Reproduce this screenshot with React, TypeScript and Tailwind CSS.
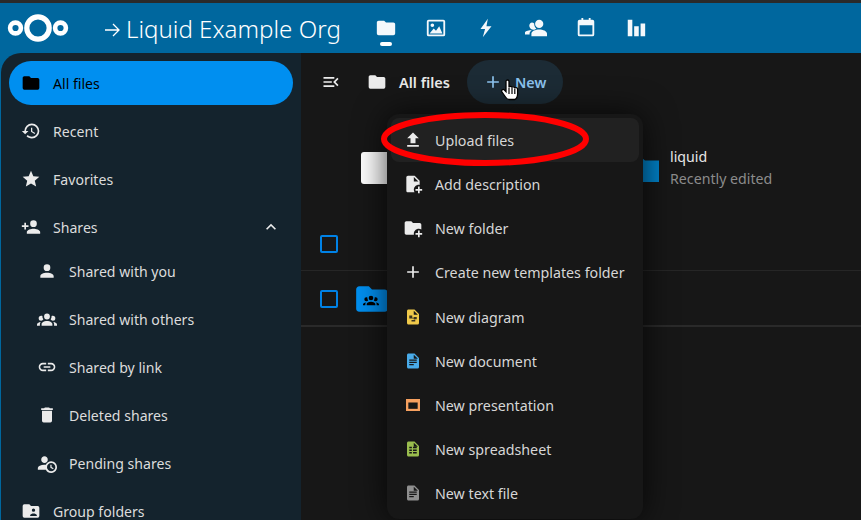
import React from "react";

const P = {
  folder: "M10,4H4C2.89,4 2,4.89 2,6V18A2,2 0 0,0 4,20H20A2,2 0 0,0 22,18V8C22,6.89 21.1,6 20,6H12L10,4Z",
  history: "M13.5,8H12V13L16.28,15.54L17,14.33L13.5,12.25V8M13,3A9,9 0 0,0 4,12H1L4.96,16.03L9,12H6A7,7 0 0,1 13,5A7,7 0 0,1 20,12A7,7 0 0,1 13,19C11.07,19 9.32,18.21 8.06,16.94L6.64,18.36C8.27,20 10.5,21 13,21A9,9 0 0,0 22,12A9,9 0 0,0 13,3",
  star: "M12,17.27L18.18,21L16.54,13.97L22,9.24L14.81,8.62L12,2L9.19,8.62L2,9.24L7.45,13.97L5.82,21L12,17.27Z",
  accountPlus: "M15,14C12.33,14 7,15.33 7,18V20H23V18C23,15.33 17.67,14 15,14M6,10V7H4V10H1V12H4V15H6V12H9V10M15,12A4,4 0 0,0 19,8A4,4 0 0,0 15,4A4,4 0 0,0 11,8A4,4 0 0,0 15,12Z",
  account: "M12,4A4,4 0 0,1 16,8A4,4 0 0,1 12,12A4,4 0 0,1 8,8A4,4 0 0,1 12,4M12,14C16.42,14 20,15.79 20,18V20H4V18C4,15.79 7.58,14 12,14Z",
  group: "M12,5.5A3.5,3.5 0 0,1 15.5,9A3.5,3.5 0 0,1 12,12.5A3.5,3.5 0 0,1 8.5,9A3.5,3.5 0 0,1 12,5.5M5,8C5.56,8 6.08,8.15 6.53,8.42C6.38,9.85 6.8,11.27 7.66,12.38C7.16,13.34 6.16,14 5,14A3,3 0 0,1 2,11A3,3 0 0,1 5,8M19,8A3,3 0 0,1 22,11A3,3 0 0,1 19,14C17.84,14 16.84,13.34 16.34,12.38C17.2,11.27 17.62,9.85 17.47,8.42C17.92,8.15 18.44,8 19,8M5.5,18.25C5.5,16.18 8.41,14.5 12,14.5C15.59,14.5 18.5,16.18 18.5,18.25V20H5.5V18.25M0,20V18.5C0,17.11 1.89,15.94 4.45,15.6C3.86,16.28 3.5,17.22 3.5,18.25V20H0M24,20H20.5V18.25C20.5,17.22 20.14,16.28 19.55,15.6C22.11,15.94 24,17.11 24,18.5V20Z",
  link: "M3.9,12C3.9,10.29 5.29,8.9 7,8.9H11V7H7A5,5 0 0,0 2,12A5,5 0 0,0 7,17H11V15.1H7C5.29,15.1 3.9,13.71 3.9,12M8,13H16V11H8V13M17,7H13V8.9H17C18.71,8.9 20.1,10.29 20.1,12C20.1,13.71 18.71,15.1 17,15.1H13V17H17A5,5 0 0,0 22,12A5,5 0 0,0 17,7Z",
  trash: "M19,4H15.5L14.5,3H9.5L8.5,4H5V6H19M6,19A2,2 0 0,0 8,21H16A2,2 0 0,0 18,19V7H6V19Z",
  accountClock: "M10.63,14.1C12.23,10.58 16.38,9.03 19.9,10.63C23.42,12.23 24.97,16.38 23.37,19.9C22.24,22.4 19.75,24 17,24C14.3,24 11.83,22.44 10.67,20H1V18C1.06,16.86 1.84,15.93 3.34,15.18C4.84,14.43 6.72,14.04 9,14C9.57,14 10.11,14.05 10.63,14.1V14.1M9,4C10.12,4.03 11.06,4.42 11.81,5.17C12.56,5.92 12.93,6.86 12.93,8C12.93,9.14 12.56,10.08 11.81,10.83C11.06,11.58 10.12,11.95 9,11.95C7.88,11.95 6.94,11.58 6.19,10.83C5.44,10.08 5.07,9.14 5.07,8C5.07,6.86 5.44,5.92 6.19,5.17C6.94,4.42 7.88,4.03 9,4M17,22A5,5 0 0,0 22,17A5,5 0 0,0 17,12A5,5 0 0,0 12,17A5,5 0 0,0 17,22M16,14H17.5V16.82L19.94,18.23L19.19,19.53L16,17.69V14Z",
  folderAccount: "M4,4H10L12,6H20A2,2 0 0,1 22,8V18A2,2 0 0,1 20,20H4A2,2 0 0,1 2,18V6A2,2 0 0,1 4,4ZM15,9A2,2 0 0,0 13,11A2,2 0 0,0 15,13A2,2 0 0,0 17,11A2,2 0 0,0 15,9ZM11,17V18H19V17C19,15.67 16.33,15 15,15C13.67,15 11,15.67 11,17Z",
  upload: "M9,16V10H5L12,3L19,10H15V16H9M5,20V18H19V20H5Z",
  filePlus: "M14,2H6C4.9,2 4,2.9 4,4V20C4,21.1 4.9,22 6,22H13.8C13.3,21.1 13,20.1 13,19C13,15.7 15.7,13 19,13C19.3,13 19.7,13 20,13.1V8L14,2M13,9V3.5L18.5,9H13M23,20H20V23H18V20H15V18H18V15H20V18H23V20Z",
  folderPlus: "M13 19C13 19.34 13.04 19.67 13.09 20H4C2.9 20 2 19.11 2 18V6C2 4.89 2.89 4 4 4H10L12 6H20C21.1 6 22 6.89 22 8V13.81C21.12 13.3 20.1 13 19 13C15.69 13 13 15.69 13 19M20 18V15H18V18H15V20H18V23H20V20H23V18H20Z",
  plus: "M19,13H13V19H11V13H5V11H11V5H13V11H19V13Z",
  chevronUp: "M7.41,15.41L12,10.83L16.59,15.41L18,14L12,8L6,14L7.41,15.41Z",
  menuOpen: "M21,15.61L19.59,17L14.58,12L19.59,7L21,8.39L17.44,12L21,15.61M3,6H16V8H3V6M3,13V11H13V13H3M3,18V16H16V18H3Z",
  image: "M4,3H20A2,2 0 0,1 22,5V19A2,2 0 0,1 20,21H4A2,2 0 0,1 2,19V5A2,2 0 0,1 4,3ZM4,5V19H20V5H4ZM8,7A2,2 0 1,1 8,11A2,2 0 1,1 8,7ZM5,18L9.5,12.5L12,15L15.5,10L19,18H5Z",
  flash: "M14,2L6,13H11L8.5,22L18,10H12.5L14,2Z",
  contacts: "M15.5,3A4.5,4.5 0 0,1 20,7.5A4.5,4.5 0 0,1 15.5,12A4.5,4.5 0 0,1 11,7.5A4.5,4.5 0 0,1 15.5,3ZM7.5,6A3.5,3.5 0 0,1 10,7C10,9.5 11,11.5 12.4,12.6C11.8,13.2 11,13.6 10.2,13.8C8,14.4 5.5,13 5,11A3.5,3.5 0 0,1 7.5,6ZM15.5,13.5C19.5,13.5 24,15.2 24,18V21H7V18C7,15.2 11.5,13.5 15.5,13.5ZM7.4,14.5C6,15.4 5,16.6 5,18V19H0V17C0,15.4 3.6,14.3 7.4,14.5Z",
  calendar: "M7,1H9V3H15V1H17V3H19A2,2 0 0,1 21,5V19A2,2 0 0,1 19,21H5A2,2 0 0,1 3,19V5A2,2 0 0,1 5,3H7V1ZM5,9V19H19V9H5Z",
  bars: "M3,3H8V21H3V3ZM10,10H15V21H10V10ZM17,7H22V21H17V7Z",
  doc: "M13,9H18.5L13,3.5V9M6,2H14L20,8V20A2,2 0 0,1 18,22H6C4.89,22 4,21.1 4,20V4C4,2.89 4.89,2 6,2Z",
};

function Ico({ d, size = 20, className = "" }: { d: string; size?: number; className?: string }) {
  return (
    <svg viewBox="0 0 24 24" width={size} height={size} className={`shrink-0 fill-current ${className}`} fillRule="evenodd">
      <path d={d} />
    </svg>
  );
}

function Logo() {
  return (
    <svg width="62" height="30" viewBox="0 0 62 30" className="shrink-0 text-white">
      <circle cx="8.5" cy="15" r="5.4" fill="none" stroke="currentColor" strokeWidth="4.6" />
      <circle cx="31" cy="15" r="11.2" fill="none" stroke="currentColor" strokeWidth="5.2" />
      <circle cx="53.5" cy="15" r="5.4" fill="none" stroke="currentColor" strokeWidth="4.6" />
    </svg>
  );
}

function Row({ d, label, sub, mb = true, active, children }: { d: string; label: string; sub?: boolean; mb?: boolean; active?: boolean; children?: React.ReactNode }) {
  return (
    <div className={`flex h-[44px] items-center rounded-full text-[14.1px] ${mb ? "mb-1" : ""} ${sub ? "pl-[28px]" : "pl-[12px]"} ${active ? "bg-[#008ff0] text-black" : "text-[#dcdcdc]"}`}>
      <span className="flex w-[20px] justify-center">
        <Ico d={d} size={20} className={active ? "text-black" : "text-[#ebebeb]"} />
      </span>
      <span className="ml-[12px] pt-[2px]">{label}</span>
      {children}
    </div>
  );
}

function DiagramIcon() {
  return (
    <svg viewBox="0 0 24 24" width="18" height="18" className="shrink-0">
      <path d={P.doc} fill="#f0c94a" />
      <path d="M7,10H11V13H13V12H17V15H13V14H11V16H13V15.5H15V18H10V16H11V14H7V10Z" fill="#3a3320" />
    </svg>
  );
}
function DocIcon() {
  return (
    <svg viewBox="0 0 24 24" width="18" height="18" className="shrink-0">
      <path d={P.doc} fill="#49abe9" />
      <path d="M7,10H17V11.5H7ZM7,13H17V14.5H7ZM7,16H13V17.5H7Z" fill="#171717" />
    </svg>
  );
}
function SlideIcon() {
  return (
    <svg viewBox="0 0 24 24" width="20" height="20" className="shrink-0">
      <path d="M3.6,4.8H20.4V19.2H3.6Z" fill="#f6a05f" />
      <path d="M6.4,9H17.6V16.6H6.4Z" fill="#171717" />
    </svg>
  );
}
function SheetIcon() {
  return (
    <svg viewBox="0 0 24 24" width="18" height="18" className="shrink-0">
      <path d={P.doc} fill="#9abd4e" />
      <path d="M7,9H10.5V11H7ZM12,9H17V11H12ZM7,12.5H10.5V14.5H7ZM12,12.5H17V14.5H12ZM7,16H10.5V18H7ZM12,16H17V18H12Z" fill="#171717" />
    </svg>
  );
}
function TextIcon() {
  return (
    <svg viewBox="0 0 24 24" width="18" height="18" className="shrink-0">
      <path d={P.doc} fill="#8f8f8f" />
      <path d="M7,10H17V11.5H7ZM7,13H17V14.5H7ZM7,16H13V17.5H7Z" fill="#171717" />
    </svg>
  );
}

function MenuRow({ icon, label, active, className = "" }: { icon: React.ReactNode; label: string; active?: boolean; className?: string }) {
  return (
    <div className={`flex h-[44px] items-center rounded-[8px] pl-[12px] text-[14.25px] text-[#d6d6d6] ${active ? "bg-[#212121]" : ""} ${className}`}>
      <span className="flex w-[20px] justify-center">{icon}</span>
      <span className="ml-[12px] pt-[2px]">{label}</span>
    </div>
  );
}

function Check() {
  return <span className="block h-[18px] w-[18px] rounded-[2px] border-2 border-[#0082e6]" />;
}

export default function App() {
  const font = { fontFamily: '"Noto Sans", "Open Sans", sans-serif' };
  return (
    <div style={font} className="relative flex h-[520px] w-[861px] flex-col overflow-hidden border-t-[3px] border-[#2a2a2a] bg-[#00679e]">
      <header className="flex h-[50px] shrink-0 items-center text-white">
        <span className="ml-[7px] flex"><Logo /></span>
        <div className="ml-[35px] mt-[2px] flex w-[240px] items-center whitespace-nowrap text-[24.1px] font-light leading-none">
          <svg width="16" height="16" viewBox="0 0 16 16" className="mr-[6px] mt-[2px] shrink-0" fill="none" stroke="currentColor" strokeWidth="1.3">
            <path d="M1,8H15M9,2L15,8L9,14" />
          </svg>
          <span>Liquid Example Org</span>
        </div>
        <nav className="ml-[31px] flex items-center gap-[28px] text-[#f4f8fb]">
          <span className="relative flex"><Ico d={P.folder} size={22} />
            <span className="absolute left-[5px] top-[25px] h-[4px] w-[12px] rounded-full bg-white" />
          </span>
          <Ico d={P.image} size={22} />
          <Ico d={P.flash} size={22} />
          <Ico d={P.contacts} size={22} />
          <Ico d={P.calendar} size={22} />
          <Ico d={P.bars} size={22} />
        </nav>
      </header>

      <div className="flex min-h-0 flex-1 pl-px">
        <aside className="w-[300px] shrink-0 rounded-tl-[20px] bg-[#14232d] px-2 pt-2">
          <Row d={P.folder} label="All files" active />
          <Row d={P.history} label="Recent" />
          <Row d={P.star} label="Favorites" />
          <Row d={P.accountPlus} label="Shares" mb={false}>
            <span className="ml-auto mr-[12px] text-[#ebebeb]"><Ico d={P.chevronUp} /></span>
          </Row>
          <Row d={P.account} label="Shared with you" sub />
          <Row d={P.group} label="Shared with others" sub />
          <Row d={P.link} label="Shared by link" sub />
          <Row d={P.trash} label="Deleted shares" sub />
          <Row d={P.accountClock} label="Pending shares" sub />
          <Row d={P.folderAccount} label="Group folders" />
        </aside>

        <main className="min-w-0 flex-1 bg-[#171717]">
          <div className="ml-[8px] mt-[7px] flex h-[44px] items-center">
            <span className="flex w-[44px] justify-center text-[#ebebeb]"><Ico d={P.menuOpen} /></span>
            <span className="ml-[14px] text-[#ebebeb]"><Ico d={P.folder} /></span>
            <span className="ml-[12px] w-[52px] whitespace-nowrap pt-[2px] text-[14.5px] font-semibold text-[#ebebeb]">All files</span>
            <div className="ml-[16px] flex h-[44px] w-[96px] items-center rounded-full bg-[#1c2b35] pl-[16px] text-[14.3px] font-semibold text-[#8cc3ee]">
              <Ico d={P.plus} />
              <span className="ml-[12px] pt-[2px]">New</span>
            </div>
          </div>

          <div className="ml-[60px] mt-[42px] flex h-[44px] items-center">
            <div className="h-[32px] w-[32px] rounded-[3px] bg-white" />
            <svg viewBox="0 0 32 32" width="32" height="32" className="ml-[235px] mt-[4px] shrink-0">
              <path d="M2,4H14L17,6.5H31V28H2Z" fill="#0082c9" />
            </svg>
            <div className="ml-[10px] text-[14.2px] leading-[22px]">
              <div className="-mt-[1px] text-[#e6e6e6]">liquid</div>
              <div className="text-[#8c8c8c]">Recently edited</div>
            </div>
          </div>

          <div className="mt-[17px] flex h-[64px] items-center border-b border-[#262626] pl-[19px] pt-[10px]">
            <Check />
          </div>
          <div className="flex h-[56px] items-center border-b-2 border-[#2a2a2a] pl-[19px] pt-[2px]">
            <Check />
            <span className="relative ml-[17px] flex text-[#008ff0]">
              <Ico d={P.folder} size={38} className="-ml-[2px]" />
              <span className="absolute left-[8px] top-[12px] text-black"><Ico d={P.group} size={16} /></span>
            </span>
          </div>
        </main>
      </div>

      <div className="absolute left-[510px] top-[104px] h-[10px] w-[10px] rotate-45 bg-[#171717]" />
      <div className="absolute left-[387px] top-[111px] w-[256px] rounded-[12px] bg-[#171717] p-[4px] shadow-[0_0_32px_rgba(0,0,0,0.75)]">
        <MenuRow active label="Upload files" icon={<Ico d={P.upload} className="text-[#ebebeb]" />} />
        <MenuRow label="Add description" icon={<Ico d={P.filePlus} className="text-[#ebebeb]" />} />
        <MenuRow label="New folder" icon={<Ico d={P.folderPlus} className="text-[#ebebeb]" />} />
        <MenuRow label="Create new templates folder" icon={<Ico d={P.plus} className="text-[#ebebeb]" />} />
        <MenuRow className="mt-px" label="New diagram" icon={<DiagramIcon />} />
        <MenuRow label="New document" icon={<DocIcon />} />
        <MenuRow label="New presentation" icon={<SlideIcon />} />
        <MenuRow label="New spreadsheet" icon={<SheetIcon />} />
        <MenuRow label="New text file" icon={<TextIcon />} />
      </div>

      <svg width="212" height="58" viewBox="0 0 212 58" className="absolute left-[379px] top-[107px]" fill="none">
        <ellipse cx="106" cy="29" rx="101" ry="24" stroke="#ff0000" strokeWidth="6" />
      </svg>

      <svg width="18" height="22" viewBox="0 0 18 22" className="absolute left-[501px] top-[76px]">
        <path d="M5,2.5C5,0.5 8,0.5 8,2.5V8.5C8,7 11,7 11,8.8C11,7.4 13.8,7.4 13.8,9.4C14,8.2 16.6,8.4 16.6,10.4V15C16.6,18 15,20.5 13.5,20.5H8C6.5,20.5 5.5,19.5 4.5,18L1,13C0,11.2 2,9.6 3.4,11L5,12.6V2.5Z" fill="#fff" stroke="#000" strokeWidth="1.3" />
        <path d="M8,9V15M11,9V15M13.8,10V15" stroke="#000" strokeWidth="1.2" />
      </svg>
    </div>
  );
}
